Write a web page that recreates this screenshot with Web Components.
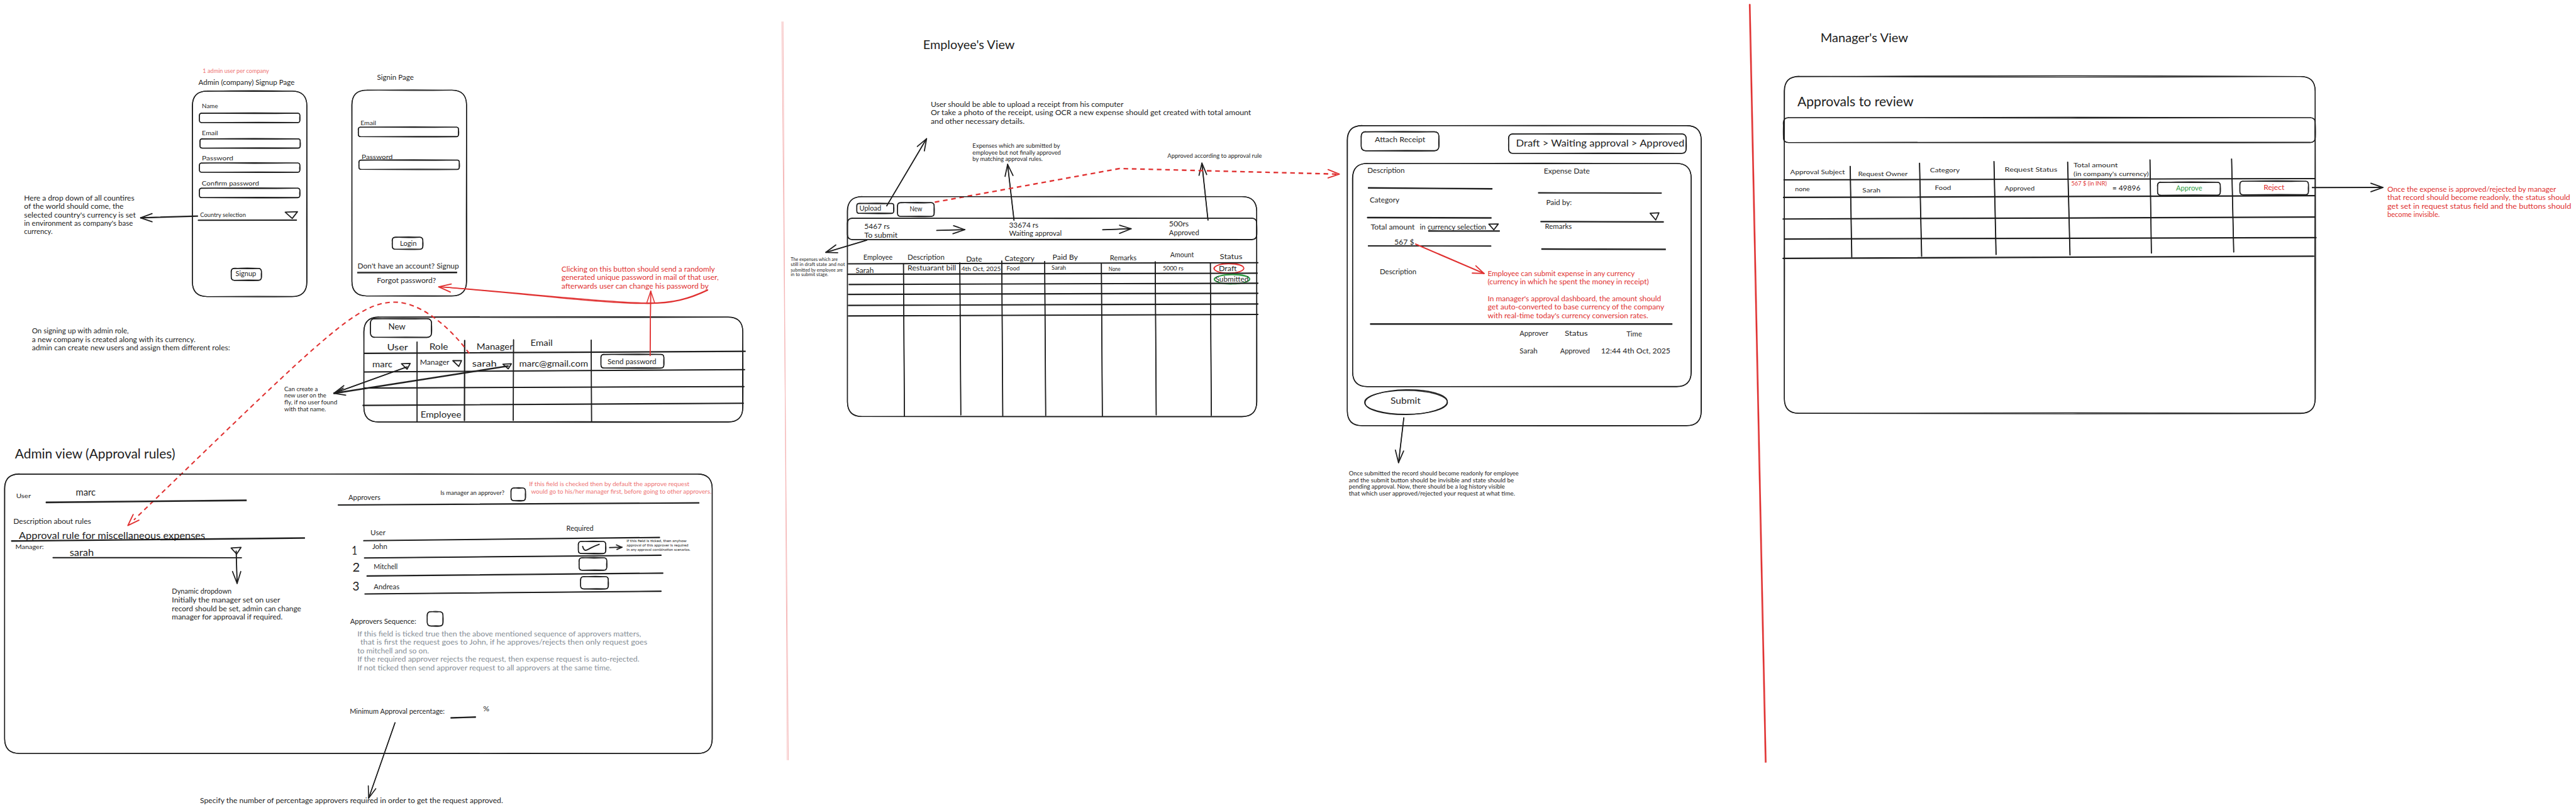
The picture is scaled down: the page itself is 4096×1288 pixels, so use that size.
<!DOCTYPE html>
<html lang="en">
<head>
<meta charset="utf-8">
<title>Expense approval whiteboard</title>
<style>
html,body{margin:0;padding:0;background:#fff}
body{width:4096px;height:1288px;overflow:hidden;font-family:Lato,"Open Sans",sans-serif;color:#1e1e1e}
</style>
</head>
<body>
<expense-board></expense-board>
<script>
const K = 4096 / 5561;
const INK = '#1e1e1e', RED = '#e03131', SOFT = '#ee7474', GREY = '#868e96', GREEN = '#2f9e44';

/* Handwritten note: one block of lines, each line fitted to its own width. */
class SketchNote extends HTMLElement {
  constructor() {
    super();
    this.attachShadow({ mode: 'open' }).innerHTML =
      `<style>
        :host{display:block;position:absolute;left:0;top:0;white-space:pre;line-height:1}
        div{display:block;height:0}
        span{display:inline-block;transform-origin:0 0;line-height:1.2}
      </style>`;
  }
  connectedCallback() {
    const { x, base, ends, size, lines, color } = this.spec;
    const fs = size * 1.03 * K;
    this.style.color = color;
    this.style.fontSize = fs + 'px';
    lines.forEach((t, i) => {
      const row = document.createElement('div');
      const s = document.createElement('span');
      s.textContent = t;
      row.append(s);
      this.shadowRoot.append(row);
      const want = (ends[i] - x[i]) * K;
      const real = s.getBoundingClientRect().width || want;
      s.style.transform = `translate(${x[i] * K}px,${base[i] * K - fs * 0.987}px) scaleX(${want / real})`;
    });
  }
}
customElements.define('sketch-note', SketchNote);

/* Ink layer: draws rough double strokes in board units. */
class SketchInk extends HTMLElement {
  constructor() {
    super();
    this.attachShadow({ mode: 'open' }).innerHTML =
      `<style>:host{display:block;position:absolute;inset:0;pointer-events:none}
       svg{display:block;width:4096px;height:1288px}
       path{fill:none;stroke-linecap:round;stroke-linejoin:round}</style>`;
  }
  connectedCallback() {
    this.shadowRoot.innerHTML += `<svg viewBox="0 0 5561 1748" preserveAspectRatio="none">${this.paths.join('')}</svg>`;
  }
}
customElements.define('sketch-ink', SketchInk);

const path = (d, w = 2, c = INK, extra = '') => `<path d="${d}" stroke="${c}" stroke-width="${w}" ${extra}/>`;

/* One sheet of the board, with its own origin and units. */
class BoardSheet extends HTMLElement {
  constructor() {
    super();
    this.attachShadow({ mode: 'open' }).innerHTML = `<style>:host{display:block;position:absolute;inset:0}</style>`;
    this.paths = [];
    this.notes = [];
  }
  frame(ox, oy, sx, sy) { this.f = [ox, oy, sx, sy]; }
  X(v) { return +(this.f[0] + v / this.f[2]).toFixed(2); }
  Y(v) { return +(this.f[1] + v / this.f[3]).toFixed(2); }
  P(p) { return [this.X(p[0]), this.Y(p[1])]; }
  note(x, base, ends, size, text, color = INK) {
    const lines = text.split('\n');
    const arr = (v) => (Array.isArray(v) ? v : lines.map(() => v));
    this.notes.push({
      x: arr(x).map((v) => this.X(v)), base: arr(base).map((v) => this.Y(v)),
      ends: arr(ends).map((v) => this.X(v)), size, lines, color
    });
  }
  line(x1, y1, x2, y2, w = 3, c = INK) {
    const [a, b] = this.P([x1, y1]), [p, q] = this.P([x2, y2]);
    const L = Math.hypot(p - a, q - b) || 1, nx = -(q - b) / L, ny = (p - a) / L, d = Math.max(0, (w - 1.9) / 2);
    const m = [(a + p) / 2, (b + q) / 2];
    this.paths.push(path(`M${a + nx * d} ${b + ny * d}Q${m[0] + nx * d * .6} ${m[1] + ny * d * .6} ${p + nx * d * .6} ${q + ny * d * .6}`, 2, c));
    this.paths.push(path(`M${a - nx * d * .6} ${b - ny * d * .6}Q${m[0] - nx * d * .6} ${m[1] - ny * d * .6} ${p - nx * d} ${q - ny * d}`, 2, c));
  }
  box(x1, y1, x2, y2, r, bow = .8, w = 1.9) {
    const [a, b] = this.P([x1, y1]), [c, d] = this.P([x2, y2]);
    const mx = (a + c) / 2, my = (b + d) / 2;
    for (const [o, e] of [[bow, .35], [-bow, -.35]]) {
      this.paths.push(path(
        `M${a + r} ${b + e}Q${mx} ${b - o * 2} ${c - r} ${b}Q${c + e} ${b + e} ${c} ${b + r}` +
        `Q${c + o} ${my} ${c + e} ${d - r}Q${c - e} ${d} ${c - r} ${d + e}` +
        `Q${mx} ${d + o * 1.4} ${a + r} ${d}Q${a + e} ${d - e} ${a} ${d - r}` +
        `Q${a - o * .7} ${my} ${a + e} ${b + r}Q${a} ${b} ${a + r} ${b + e}`, w));
    }
  }
  tri(...p) {
    const g = p.map((q) => this.P(q));
    this.paths.push(path(`M${g[0]}L${g[1]}L${g[2]}Z`, 2.4));
  }
  head(tip, l, r, w = 2, c = INK) {
    const t = this.P(tip);
    this.paths.push(path(`M${this.P(l)}L${t}L${this.P(r)}`, w, c));
  }
  arrow(x1, y1, x2, y2, l, r, w = 2, c = INK) {
    this.line(x1, y1, x2, y2, w, c);
    this.head([x2, y2], l, r, Math.min(w, 2.4), c);
  }
  oval(cx, cy, rx, ry, c = INK, w = 2) {
    const [x, y] = this.P([cx, cy]), a = rx / this.f[2], b = ry / this.f[3];
    this.paths.push(`<ellipse cx="${x}" cy="${y}" rx="${a}" ry="${b}" fill="none" stroke="${c}" stroke-width="${w}"/>`);
    this.paths.push(`<ellipse cx="${x + .4}" cy="${y - .3}" rx="${a - .7}" ry="${b + .9}" fill="none" stroke="${c}" stroke-width="${w}" transform="rotate(-1 ${x} ${y})"/>`);
  }
  free(d, w, c, dash) { this.paths.push(path(d, w, c, dash ? `stroke-dasharray="${dash}" style="stroke-linecap:butt"` : '')); }
  connectedCallback() {
    this.draw();
    const ink = document.createElement('sketch-ink');
    ink.paths = this.paths;
    this.shadowRoot.append(ink);
    for (const n of this.notes) {
      const el = document.createElement('sketch-note');
      el.spec = n;
      this.shadowRoot.append(el);
    }
  }
}

customElements.define('auth-sheet', class extends BoardSheet {
  draw() {
    this.frame(380, 130, 2.3758, 2.9585);
    this.note(137, 86, 477, 12, '1 admin user per company', SOFT);
    this.note(115, 157, 608, 14.7, 'Admin (company) Signup Page');
    this.note(1031, 127, 1219, 14.7, 'Signin Page');
    this.box(84, 197, 671, 1509, 32);
    this.note(133, 307, 215, 13.7, 'Name');
    this.box(120, 338, 635, 398, 5);
    this.note(133, 482, 215, 13.7, 'Email');
    this.box(123, 502, 637, 561, 5);
    this.note(133, 639, 294, 13.7, 'Password');
    this.box(120, 656, 635, 715, 5);
    this.note(132, 803, 426, 13.7, 'Confirm password');
    this.box(120, 817, 635, 877, 5);
    this.note(124, 1006, 358, 12, 'Country selection');
    this.line(114, 1021, 618, 1021, 2.8);
    this.tri([560, 970], [623, 967], [596, 1010]);
    this.box(283, 1329, 438, 1405, 7);
    this.note(305, 1377, 411, 14.7, 'Signup');
    this.box(902, 191, 1490, 1505, 32);
    this.note(946, 414, 1026, 13.7, 'Email');
    this.box(935, 427, 1449, 488, 5);
    this.note(952, 633, 1111, 13.7, 'Password');
    this.box(938, 637, 1453, 697, 5);
    this.box(1109, 1130, 1266, 1207, 7);
    this.note(1149, 1184, 1234, 14.7, 'Login');
    this.note(931, 1332, 1451, 14.7, "Don't have an account? Signup");
    this.line(931, 1355, 1440, 1355, 3.6);
    this.note(1030, 1423, 1333, 14.7, 'Forgot password?');

    this.frame(0, 400, 2.6133, 3);
    this.note(136, [98, 153, 208, 264, 317], [758, 697, 766, 750, 297], 14.7,
      "Here a drop down of all countires\nof the world should come, the\nselected country's currency is set\nin environment as company's base\ncurrency.");
    this.arrow(1115, 199, 793, 210, [858, 183], [858, 236], 3.2);
    this.note(180, [959, 1014, 1070], [726, 1103, 1298], 14.7,
      'On signing up with admin role,\na new company is created along with its currency.\nadmin can create new users and assign them different roles:');
  }
});

customElements.define('users-sheet', class extends BoardSheet {
  draw() {
    this.frame(580, 540, 1.4792, 3);
    this.note(935, [138, 193, 249], [1425, 1437, 1405], 14.7,
      'Clicking on this button should send a randomly\ngenerated unique password in mail of that user,\nafterwards user can change his password by', RED);
    this.box(304, 433, 1514, 1112, 32, .9);
    this.box(325, 443, 520, 564, 10);
    this.note(382, 519, 437, 18.5, 'New');
    this.note(378, 652, 445, 18.5, 'User');
    this.note(513, 648, 573, 18.5, 'Role');
    this.note(664, 650, 780, 18.5, 'Manager');
    this.note(836, 625, 907, 18.5, 'Email');
    this.note(331, 762, 395, 18.5, 'marc');
    this.note(483, 745, 577, 15.5, 'Manager');
    this.note(650, 757, 728, 18.5, 'sarah');
    this.note(800, 760, 1020, 18.5, 'marc@gmail.com');
    this.box(1061, 674, 1262, 763, 7);
    this.note(1082, 739, 1238, 14.7, 'Send password');
    this.note(485, 1088, 615, 18.5, 'Employee');
    this.line(474, 594, 474, 1110, 2.2);
    this.line(626, 584, 625, 1103, 3);
    this.line(782, 580, 781, 1102, 2.2);
    this.line(1030, 582, 1031, 1110, 2.2);
    this.line(305, 667, 1522, 655, 3.2);
    this.line(305, 788, 1520, 773, 2.8);
    this.line(305, 892, 1518, 883, 2.8);
    this.line(301, 1004, 1516, 991, 3);
    this.tri([424, 735], [452, 733], [442, 770]);
    this.tri([588, 715], [616, 714], [607, 752]);
    this.tri([748, 738], [775, 735], [765, 768]);
    this.arrow(442, 755, 208, 926, [240, 877], [246, 915], 2.4);
    this.arrow(765, 750, 208, 926, [238, 893], [246, 938], 3.6);
    this.note(50, [915, 957, 1002, 1047], [157, 184, 219, 183], 11.8,
      'Can create a\nnew user on the\nfly, if no user found\nwith that name.');
    const q = (x, y) => this.P([x, y]).join(' ');
    this.free(`M${q(1402, 256)}C${q(1340, 315)} ${q(1290, 345)} ${q(1200, 341)}C${q(1050, 335)} ${q(800, 273)} ${q(543, 237)}`, 2, RED);
    this.free(`M${q(1402, 259)}C${q(1345, 315)} ${q(1290, 348)} ${q(1200, 345)}C${q(1050, 343)} ${q(800, 276)} ${q(543, 237)}`, 2, RED);
    this.head([543, 237], [583, 219], [580, 271], 2.6, RED);
    this.arrow(1218, 682, 1220, 264, [1208, 337], [1232, 337], 2, RED);
    this.free('M1013 763C975 710 910 652 852 652C770 652 700 725 289 1122', 2.8, RED, '10 7.7');
    this.frame(0, 940, 2.0103, 3);
    this.head([555, 582], [578, 511], [603, 548], 2.6, RED);
  }
});

customElements.define('rules-sheet', class extends BoardSheet {
  draw() {
    this.frame(0, 0, 1, 1);
    this.box(10, 1023, 1537.5, 1626, 32, .4);
    this.frame(0, 940, 2.0103, 3);
    this.note(65, 152, 760, 28, 'Admin view (Approval rules)');
    this.note(70, 408, 134, 13.7, 'User');
    this.note(329, 392, 415, 19.5, 'marc');
    this.line(200, 432, 1069, 420, 3.8);
    this.note(58, 574, 395, 14.2, 'Description about rules');
    this.note(82, 670, 890, 20, 'Approval rule for miscellaneous expenses');
    this.line(50, 682, 1322, 664, 3.6);
    this.note(67, 738, 190, 13.7, 'Manager:');
    this.note(302, 784, 407, 19.5, 'sarah');
    this.line(230, 790, 1048, 791, 2.7);
    this.tri([1003, 728], [1046, 724], [1027, 767]);
    this.arrow(1025, 748, 1029, 957, [1009, 880], [1045, 880], 2.4);
    this.note(746, [1026, 1080, 1137, 1191], [1005, 1216, 1307, 1226], 14.7,
      'Dynamic dropdown\nInitially the manager set on user\nrecord should be set, admin can change\nmanager for approaval if required.');

    this.frame(700, 1000, 1.8233, 3);
    this.note(95, 239, 221, 14.2, 'Approvers');
    this.line(55, 269, 1475, 256, 3);
    this.note(457, 208, 709, 12.6, 'Is manager an approver?');
    this.box(735, 159, 792, 242, 7);
    this.note([806, 814], [152, 198], [1437, 1524], 12.6,
      'If this field is checked then by default the approve request\nwould go to his/her manager first, before going to other approvers.', SOFT);
    this.note(182, 469, 241, 14.2, 'User');
    this.note(953, 442, 1060, 14.2, 'Required');
    this.line(155, 500, 1320, 480, 3.2);
    this.line(158, 612, 1326, 595, 2.9);
    this.line(168, 729, 1333, 711, 3.2);
    this.line(160, 845, 1326, 828, 2.9);
    this.note(189, 560, 248, 14.2, 'John');
    this.note(195, 690, 289, 14.2, 'Mitchell');
    this.note(195, 817, 296, 14.2, 'Andreas');
    this.note(108, 596, 130, 25, '1');
    this.note(111, 705, 140, 25, '2');
    this.note(111, 826, 138, 25, '3');
    this.box(1000, 505, 1108, 584, 7);
    this.box(1003, 611, 1112, 692, 7);
    this.box(1009, 733, 1118, 813, 7);
    const q = (x, y) => this.P([x, y]).join(' ');
    this.free(`M${q(1017, 538)}C${q(1021, 560)} ${q(1026, 566)} ${q(1033, 561)}C${q(1048, 551)} ${q(1058, 536)} ${q(1082, 524)}`, 2.6, INK);
    this.arrow(1123, 545, 1172, 543, [1150, 528], [1152, 557], 2.4);
    this.note(1190, [510, 540, 567], [1426, 1433, 1441], 8,
      'If this field is ticked, then anyhow\napproval of this approver is required\nin any approval combination scenarios.');

    this.frame(400, 1290, 1.3517, 3);
    this.note(481, 172, 674, 14.2, 'Approvers Sequence:');
    this.box(706, 90, 752, 183, 8);
    this.note([502, 511, 502, 502, 502], [250, 304, 361, 415, 472], [1330, 1348, 711, 1325, 1244], 14.7,
      'If this field is ticked true then the above mentioned sequence of approvers matters,\nthat is first the request goes to John, if he approves/rejects then only request goes\nto mitchell and so on.\nIf the required approver rejects the request, then expense request is auto-rejected.\nIf not ticked then send approver request to all approvers at the same time.', GREY);
    this.note(480, 756, 757, 14.2, 'Minimum Approval percentage:');
    this.line(775, 777, 847, 773, 3.4);
    this.note(869, 737, 887, 14, '%');
    this.arrow(612, 809, 535, 1298, [534, 1217], [556, 1236], 2.2);
    this.note(43, 1330, 927, 14.7, 'Specify the number of percentage approvers required in order to get the request approved.');
  }
});

customElements.define('expenses-sheet', class extends BoardSheet {
  draw() {
    this.frame(0, 0, 1, 1);
    this.free('M1688 47L1702 1640', 1.3, '#f5b5b5');
    this.free('M1690.5 47L1699.5 1640', 1.3, '#f5b5b5');
    this.frame(1680, 60, 1.4519, 3);
    this.note(454, 139, 741, 26, "Employee's View");
    this.note(478, [511, 567, 622], [1082, 1482, 772], 14.7,
      'User should be able to upload a receipt from his computer\nOr take a photo of the receipt, using OCR a new expense should get created with total amount\nand other necessary details.');
    this.note(609, [780, 825, 866], [883, 886, 829], 11.8,
      'Expenses which are submitted by\nemployee but not finally approved\nby matching approval rules.');
    this.note(1220, 845, 1516, 11.8, 'Approved according to approval rule');
    this.arrow(340, 1153, 465, 718, [436, 768], [458, 797], 2.4);
    this.arrow(739, 1246, 719, 884, [711, 962], [736, 956], 2.4);
    this.arrow(1347, 1245, 1328, 876, [1319, 955], [1343, 950], 2.4);
    this.free('M2018 436.3L2417 363.7L2886 375.7', 3.2, RED, '10 8');

    this.frame(1680, 410, 1.4792, 3);
    this.box(221, 43, 1528, 1467, 32, .5);
    this.box(251, 87, 369, 151, 5);
    this.note(259, 139, 329, 14.2, 'Upload');
    this.box(381, 82, 498, 171, 7);
    this.note(420, 140, 460, 14.2, 'New');
    this.box(221, 183, 1528, 321, 11, .7);
    this.note(275, [254, 307], [356, 381], 14.5, '5467 rs\nTo submit');
    this.arrow(506, 262, 596, 257, [560, 231], [558, 283], 2.4);
    this.note(737, [242, 298], [831, 905], 14.5, '33674 rs\nWaiting approval');
    this.arrow(1036, 257, 1127, 251, [1090, 228], [1090, 281], 2.4);
    this.note(1248, [236, 292], [1311, 1344], 14.5, '500rs\nApproved');
    this.arrow(283, 325, 152, 404, [184, 356], [190, 406], 2.8);
    this.note(40, [460, 493, 527, 558], [190, 213, 206, 160], 9,
      'The expenses which are\nstill in draft state and not\nsubmitted by employee are\nin to submit stage.');
    this.note(272, 455, 365, 14.2, 'Employee');
    this.note(413, 454, 531, 14.2, 'Description');
    this.note(600, 467, 651, 14.2, 'Date');
    this.note(723, 463, 818, 14.2, 'Category');
    this.note(876, 456, 957, 14.2, 'Paid By');
    this.note(1059, 458, 1144, 14.2, 'Remarks');
    this.note(1252, 439, 1327, 14.2, 'Amount');
    this.note(1410, 451, 1482, 14.2, 'Status');
    this.note(247, 540, 305, 14.2, 'Sarah');
    this.note(413, 526, 568, 14.2, 'Restuarant bill');
    this.note(585, 523, 711, 13.2, '4th Oct, 2025');
    this.note(729, 522, 771, 12.4, 'Food');
    this.note(873, 520, 919, 12, 'Sarah');
    this.note(1055, 528, 1093, 11.6, 'None');
    this.note(1228, 523, 1294, 12.4, '5000 rs');
    this.note(1407, 530, 1464, 14.2, 'Draft');
    this.note(1396, 597, 1502, 14.2, 'Submitted');
    this.oval(1439, 508, 48, 30, RED);
    this.oval(1449, 578, 57, 29, GREEN);
    this.line(224, 478, 1532, 471, 2.8);
    this.line(222, 545, 1530, 539, 3.2);
    this.line(226, 611, 1532, 604, 3.2);
    this.line(224, 676, 1532, 669, 3.2);
    this.line(224, 747, 1532, 738, 3.2);
    this.line(224, 815, 1532, 806, 3);
    for (const [x, y, b] of [[400, 478, 1466], [580, 472, 1456], [714, 460, 1462], [851, 463, 1460], [1032, 478, 1462], [1204, 465, 1456], [1380, 471, 1460]])
      this.line(x, y, x + 3, b, 2.3);
  }
});

customElements.define('expense-form-sheet', class extends BoardSheet {
  draw() {
    this.frame(2700, 240, 1.568, 3);
    this.head([300, 407], [262, 378], [262, 432], 2.6, RED);
    this.box(327, 93, 1525, 2036, 32, .5);
    this.box(345, 338, 1491, 1783, 32, .6);
    this.box(374, 133, 637, 256, 10);
    this.note(420, 205, 591, 14.2, 'Attach Receipt');
    this.box(873, 147, 1474, 273, 10);
    this.note(898, 227, 1468, 20, 'Draft > Waiting approval > Approved');
    this.note(395, 401, 521, 14.2, 'Description');
    this.note(992, 405, 1148, 14.2, 'Expense Date');
    this.line(398, 496, 817, 503, 3.4);
    this.line(974, 528, 1390, 530, 3);
    this.note(403, 594, 503, 14.2, 'Category');
    this.note(1000, 610, 1087, 14.2, 'Paid by:');
    this.line(395, 688, 814, 691, 3.6);
    this.line(982, 714, 1397, 717, 3.4);
    this.tri([1352, 661], [1382, 658], [1371, 704]);
    this.note(406, 768, 555, 14.2, 'Total amount');
    this.note(572, 768, 797, 14.2, 'in currency selection');
    this.tri([806, 731], [838, 730], [823, 768]);
    this.line(602, 775, 842, 776, 3.4);
    this.note(996, 767, 1087, 14.2, 'Remarks');
    this.note(486, 865, 553, 15.5, '567 $');
    this.line(398, 872, 813, 873, 2.7);
    this.line(985, 892, 1404, 895, 3.4);
    this.note(437, 1060, 561, 14.2, 'Description');
    this.arrow(558, 860, 790, 1051, [762, 1001], [750, 1048], 3, RED);

    this.frame(2880, 560, 1.9122, 2.9037);
    this.note(634, [103, 155, 262, 315, 370], [1241, 1299, 1350, 1363, 1297], 14.7,
      "Employee can submit expense in any currency\n(currency in which he spent the money in receipt)\nIn manager's approval dashboard, the amount should\nget auto-converted to base currency of the company\nwith real-time today's currency conversion rates.", RED);
    this.line(150, 404, 1395, 405, 3.6);
    this.note(766, 483, 884, 14.2, 'Approver');
    this.note(952, 483, 1047, 14.2, 'Status');
    this.note(1207, 484, 1271, 14.2, 'Time');
    this.note(766, 590, 840, 14.2, 'Sarah');
    this.note(933, 590, 1056, 14.2, 'Approved');
    this.note(1102, 590, 1388, 14.2, '12:44 4th Oct, 2025');
    this.oval(297, 895, 171, 75);
    this.note(233, 909, 357, 18.5, 'Submit');
    this.arrow(288, 992, 266, 1273, [253, 1194], [287, 1200], 2.4);
    this.note(61, [1357, 1400, 1442, 1485], [762, 742, 705, 747], 11.8,
      'Once submitted the record should become readonly for employee\nand the submit button should be invisible and state should be\npending approval. Now, there should be a log history visible\nthat which user approved/rejected your request at what time.');
  }
});

customElements.define('manager-sheet', class extends BoardSheet {
  draw() {
    this.frame(0, 0, 1, 1);
    this.line(3777.5, 9.5, 3811.5, 1645, 4, RED);
    this.box(3852, 165, 4998, 892, 32, 1.5);
    this.box(3850, 254, 4998, 307.5, 11, 1);
    this.line(3851, 388, 4998, 385.5, 2.6);
    this.line(3850, 426, 4998, 422.5, 3.2);
    this.line(3849, 472.5, 4998, 468.5, 3.2);
    this.line(3852, 515.6, 5000, 513, 3.2);
    this.line(3849, 557.5, 4995, 553, 3.4);
    this.frame(3760, 0, 1.8233, 2.7034);
    this.note(310, 247, 655, 26, "Manager's View");
    this.note(219, 623, 676, 28, 'Approvals to review');
    this.line(427, 970, 433, 1500, 2.6);
    this.line(700, 952, 708, 1495, 2.6);
    this.line(993, 942, 1001, 1485, 2.6);
    this.line(1283, 946, 1292, 1488, 2.6);
    this.note(191, 1017, 406, 13.7, 'Approval Subject');
    this.note(458, 1030, 653, 13.7, 'Request Owner');
    this.note(741, 1005, 858, 13.7, 'Category');
    this.note(1035, 1002, 1242, 13.7, 'Request Status');
    this.note(1306, [978, 1028], [1480, 1602], 13.7, "Total amount\n(in company's currency)");
    this.note(210, 1120, 268, 13, 'none');
    this.note(475, 1125, 546, 13.7, 'Sarah');
    this.note(760, 1111, 824, 13.7, 'Food');
    this.note(1035, 1112, 1153, 13.7, 'Approved');
    this.note(1297, 1085, 1437, 12, '567 $ (in INR)', RED);
    this.frame(4400, 310, 1.3506, 3);
    this.note(216, 303, 298, 14.7, '= 49896');
    this.line(326, 105, 330, 709, 2.4);
    this.line(564, 99, 570, 702, 2.4);
    this.box(348, 250, 531, 334, 7);
    this.note(402, 306, 478, 14.7, 'Approve', GREEN);
    this.box(588, 243, 788, 331, 7);
    this.note(657, 300, 718, 14.7, 'Reject', RED);
    this.arrow(799, 284, 1005, 284, [970, 256], [970, 311], 2.8);
    this.note(1018, [311, 366, 421, 477], [1510, 1551, 1554, 1171], 14.7,
      'Once the expense is approved/rejected by manager\nthat record should become readonly, the status should\nget set in request status field and the buttons should\nbecome invisible.', RED);
  }
});

customElements.define('expense-board', class extends HTMLElement {
  constructor() {
    super();
    this.attachShadow({ mode: 'open' }).innerHTML =
      `<style>:host{display:block;position:relative;width:4096px;height:1288px;background:#fff;overflow:hidden}</style>
       <auth-sheet></auth-sheet><users-sheet></users-sheet><rules-sheet></rules-sheet>
       <expenses-sheet></expenses-sheet><expense-form-sheet></expense-form-sheet><manager-sheet></manager-sheet>`;
  }
});
</script>
</body>
</html>
